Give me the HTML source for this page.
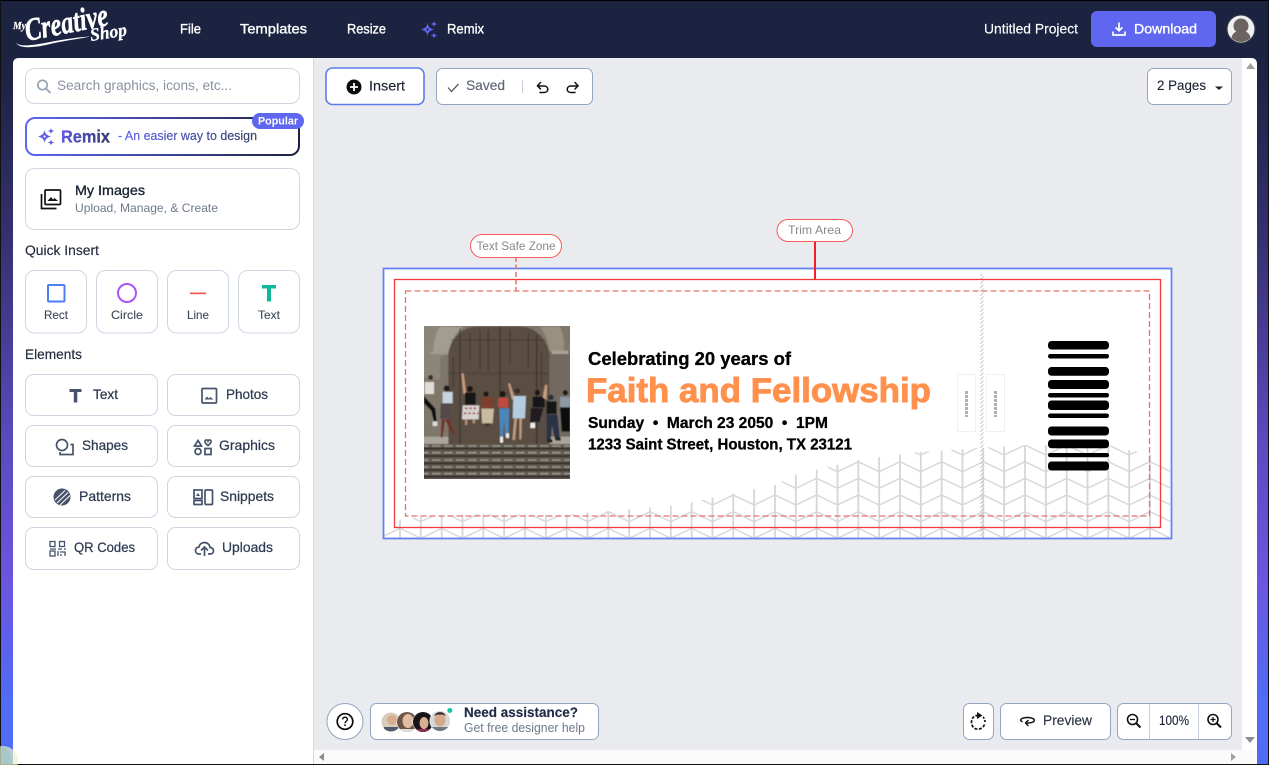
<!DOCTYPE html>
<html lang="en">
<head>
<meta charset="utf-8">
<title>My Creative Shop</title>
<style>
html,body{margin:0;padding:0;width:1269px;height:765px;overflow:hidden;background:#000}
svg{display:block}
text{font-family:"Liberation Sans",sans-serif}
.b{fill:#fff;stroke:#cfd6e2;stroke-width:1}
.t{fill:#fff;stroke:#93a5c0;stroke-width:1}
.l{font-size:14px;fill:#2f3b52;stroke:#2f3b52;stroke-width:.25}
.q{font-size:12px;fill:#3d4858;stroke:#3d4858;stroke-width:.1}
.n{font-size:14px;fill:#fff;stroke:#fff;stroke-width:.35}
.i{fill:none;stroke:#46536b;stroke-width:1.7}
.k{fill:none;stroke:#111;stroke-width:1.5;stroke-linecap:round;stroke-linejoin:round}
.s{font-family:"Liberation Serif",serif;font-weight:700;font-style:italic}
</style>
</head>
<body>
<svg width="1269" height="765" viewBox="0 0 1269 765" xmlns="http://www.w3.org/2000/svg">
<defs>
<linearGradient id="g" x1="0" y1="0" x2="0" y2="1">
<stop offset="0" stop-color="#1c2340"/><stop offset=".1" stop-color="#1e2344"/><stop offset=".31" stop-color="#35306f"/><stop offset=".58" stop-color="#5a4bc0"/><stop offset=".76" stop-color="#6b55e0"/><stop offset=".92" stop-color="#4f6cf5"/><stop offset="1" stop-color="#4f6cf5"/>
</linearGradient>
<linearGradient id="rx" x1="0" y1="0" x2="1" y2="0"><stop offset="0" stop-color="#5f66ef"/><stop offset="1" stop-color="#1c2340"/></linearGradient>
<linearGradient id="rt" gradientUnits="userSpaceOnUse" x1="118" y1="0" x2="257" y2="0"><stop offset="0" stop-color="#5f66ef"/><stop offset="1" stop-color="#3a4568"/></linearGradient>
<linearGradient id="rm" gradientUnits="userSpaceOnUse" x1="61" y1="0" x2="110" y2="0"><stop offset="0" stop-color="#5f5ae0"/><stop offset="1" stop-color="#333a70"/></linearGradient>
<pattern id="chev" patternUnits="userSpaceOnUse" x="400" y="444" width="250" height="100">
<path d="M0 0V100M20.83 0V100M41.67 0V100M62.5 0V100M83.33 0V100M104.17 0V100M125 0V100M145.83 0V100M166.67 0V100M187.5 0V100M208.33 0V100M229.17 0V100M250 0V100" stroke="#d6d6d6" stroke-width="1.8"/>
<path id="zz" d="M0 1L20.83 11L41.67 1L62.5 11L83.33 1L104.17 11L125 1L145.83 11L166.67 1L187.5 11L208.33 1L229.17 11L250 1" fill="none" stroke="#d8d8d8" stroke-width="1.5"/>
<path d="M0 17.67L20.83 27.67L41.67 17.67L62.5 27.67L83.33 17.67L104.17 27.67L125 17.67L145.83 27.67L166.67 17.67L187.5 27.67L208.33 17.67L229.17 27.67L250 17.67" fill="none" stroke="#d8d8d8" stroke-width="1.5"/>
<path d="M0 34.33L20.83 44.33L41.67 34.33L62.5 44.33L83.33 34.33L104.17 44.33L125 34.33L145.83 44.33L166.67 34.33L187.5 44.33L208.33 34.33L229.17 44.33L250 34.33" fill="none" stroke="#d8d8d8" stroke-width="1.5"/>
<path d="M0 51L20.83 61L41.67 51L62.5 61L83.33 51L104.17 61L125 51L145.83 61L166.67 51L187.5 61L208.33 51L229.17 61L250 51" fill="none" stroke="#d8d8d8" stroke-width="1.5"/>
<path d="M0 67.67L20.83 77.67L41.67 67.67L62.5 77.67L83.33 67.67L104.17 77.67L125 67.67L145.83 77.67L166.67 67.67L187.5 77.67L208.33 67.67L229.17 77.67L250 67.67" fill="none" stroke="#d8d8d8" stroke-width="1.5"/>
<path d="M0 84.33L20.83 94.33L41.67 84.33L62.5 94.33L83.33 84.33L104.17 94.33L125 84.33L145.83 94.33L166.67 84.33L187.5 94.33L208.33 84.33L229.17 94.33L250 84.33" fill="none" stroke="#d8d8d8" stroke-width="1.5"/>
</pattern>
<pattern id="hat" patternUnits="userSpaceOnUse" width="4" height="4">
<path d="M0 4L4 0" stroke="#bdbdbd" stroke-width=".8"/>
</pattern>
<filter id="soft" x="0" y="0" width="1" height="1"><feGaussianBlur stdDeviation="1.3"/></filter>
<clipPath id="ph"><rect x="424" y="326" width="146" height="153"/></clipPath>
<clipPath id="av1"><circle cx="391" cy="722" r="9.5"/></clipPath>
<clipPath id="av2"><circle cx="407" cy="722" r="10"/></clipPath>
<clipPath id="av3"><circle cx="423" cy="722" r="10"/></clipPath>
<clipPath id="av4"><circle cx="440" cy="721" r="10"/></clipPath>
<clipPath id="ava"><circle cx="1241" cy="29" r="13"/></clipPath>
<path id="sp" fill-rule="evenodd" d="M7.5 2C8.300 6 9.500 7.200 14 8.500C9.500 9.800 8.300 11 7.500 15C6.700 11 5.500 9.800 1 8.500C5.500 7.200 6.700 6 7.500 2ZM7.500 7.400A1.100 1.100 0 1 0 7.500 9.600A1.100 1.100 0 1 0 7.500 7.400ZM14 0C14.500 2 15 2.500 17.500 3C15 3.500 14.500 4 14 6C13.500 4 13 3.500 10.500 3C13 2.500 13.500 2 14 0ZM14 11.500C14.500 13.500 15 14 17.500 14.500C15 15 14.500 15.500 14 17.500C13.500 15.500 13 15 10.500 14.500C13 14 13.500 13.500 14 11.500Z"/>
</defs>

<rect width="1269" height="765" fill="url(#g)"/>
<rect width="1269" height="58" fill="#1c2340"/>
<rect width="1269" height="1" fill="#000"/>
<rect width="1" height="765" fill="#111"/>
<rect x="1268" width="1" height="765" fill="#111"/>

<!-- logo -->
<g fill="#fff" stroke="#fff">
<text class="s" x="13" y="29" font-size="10.500" stroke-width=".2" textLength="13" lengthAdjust="spacingAndGlyphs">My</text>
<text class="s" transform="translate(27 41) rotate(-11)" font-size="32" stroke-width=".5" textLength="84" lengthAdjust="spacingAndGlyphs">Creative</text>
<text class="s" transform="translate(91 41) rotate(-9)" font-size="18" stroke-width=".3" textLength="37" lengthAdjust="spacingAndGlyphs">Shop</text>
<path stroke="none" d="M16 42C18 47 30 46 50 42C65 39 80 37 91 36.500C78 39 62 41 48 44.500C32 48 18 49 16 42Z"/>
</g>

<!-- nav -->
<text class="n" x="180" y="33.500" textLength="21" lengthAdjust="spacingAndGlyphs">File</text>
<text class="n" x="240" y="33.500" textLength="67" lengthAdjust="spacingAndGlyphs">Templates</text>
<text class="n" x="347" y="33.500" textLength="39" lengthAdjust="spacingAndGlyphs">Resize</text>
<use href="#sp" x="420" y="21" fill="#5f66ef"/>
<text class="n" x="447" y="33.500" textLength="37" lengthAdjust="spacingAndGlyphs">Remix</text>
<text class="n" x="984" y="33.500" textLength="94" lengthAdjust="spacingAndGlyphs" style="stroke-width:.15">Untitled Project</text>
<rect x="1091" y="11" width="125" height="36" rx="6" fill="#5f66ef"/>
<path d="M1119 22.500V30.500M1115.600 27.400L1119 30.800L1122.400 27.400M1113 31.500V35H1125V31.500" fill="none" stroke="#fff" stroke-width="1.700"/>
<text class="n" x="1134" y="33.500" textLength="63" lengthAdjust="spacingAndGlyphs">Download</text>
<circle cx="1241" cy="29" r="15" fill="#2a2f45"/>
<circle cx="1241" cy="29" r="13.500" fill="#eef0f2"/>
<g clip-path="url(#ava)" fill="#6b6460"><circle cx="1241" cy="26" r="7.500"/><path d="M1231 43C1231 33 1235 31 1241 31C1247 31 1251 33 1251 43Z"/></g>

<!-- main panels -->
<path d="M19 58H1251Q1257 58 1257 64V764H13V64Q13 58 19 58Z" fill="#fff"/>
<rect x="314" y="58" width="928" height="692" fill="#e9ebef"/>
<rect x="313" y="58" width="1" height="706" fill="#d5d9e2"/>
<rect x="314" y="750" width="943" height="14" fill="#fafafa"/>
<rect y="764" width="1269" height="1" fill="#111"/>
<path d="M1246 69L1250.500 63L1255 69Z" fill="#a0a0a0"/>
<path d="M1245 737H1255L1250 743Z" fill="#8e8e8e"/>
<path d="M324 753V761L319 757Z" fill="#8a8a8a"/>
<path d="M1231 753V761L1236 757Z" fill="#a0a0a0"/>
<circle cx="3" cy="761" r="15" fill="#e8f2c8" opacity=".7"/>
<path d="M1 745.500A14 16 0 0 1 11 764H1Z" fill="#a5c8c8"/>

<!-- search -->
<rect class="b" x="25.500" y="68.500" width="274" height="35" rx="9"/>
<circle cx="42.500" cy="85" r="4.700" fill="none" stroke="#93a0ae" stroke-width="1.600"/><path d="M46 88.500L50.500 93" stroke="#93a0ae" stroke-width="1.800"/>
<text x="57" y="90" font-size="13.500" fill="#8893a0" textLength="175" lengthAdjust="spacingAndGlyphs">Search graphics, icons, etc...</text>

<!-- remix -->
<rect x="26" y="118" width="273" height="37" rx="9" fill="#fff" stroke="url(#rx)" stroke-width="2"/>
<use href="#sp" x="37" y="128" fill="#5f5ae0"/>
<text x="61" y="142.500" font-size="17.500" font-weight="700" fill="url(#rm)" stroke="url(#rm)" stroke-width=".3" textLength="49" lengthAdjust="spacingAndGlyphs">Remix</text>
<text x="118" y="140" font-size="12.500" fill="url(#rt)" stroke="url(#rt)" stroke-width=".2" textLength="139" lengthAdjust="spacingAndGlyphs">- An easier way to design</text>
<rect x="252" y="113" width="52" height="16" rx="8" fill="#5f66ef"/>
<text x="258" y="124.500" font-size="11" font-weight="700" fill="#fff" textLength="40" lengthAdjust="spacingAndGlyphs">Popular</text>

<!-- my images -->
<rect class="b" x="25.500" y="168.500" width="274" height="61" rx="9"/>
<g fill="none" stroke="#111" stroke-width="1.700"><rect x="45" y="190" width="15.500" height="14.500" rx="1"/><path d="M41.500 194V208.500H56.500"/></g>
<path d="M47.500 201L51 197L53 199.500L54.500 198L58 201Z" fill="#111"/>
<text x="75" y="195" font-size="14" fill="#1a2233" stroke="#1a2233" stroke-width=".35" textLength="70" lengthAdjust="spacingAndGlyphs">My Images</text>
<text x="75" y="212" font-size="12" fill="#6d7a8c" textLength="143" lengthAdjust="spacingAndGlyphs">Upload, Manage, &amp; Create</text>

<!-- quick insert -->
<text x="25" y="255" font-size="14" fill="#222b3d" stroke="#222b3d" stroke-width=".15" textLength="74" lengthAdjust="spacingAndGlyphs">Quick Insert</text>
<rect class="b" x="25.500" y="270.500" width="61" height="62.500" rx="9"/>
<rect class="b" x="96.500" y="270.500" width="61" height="62.500" rx="9"/>
<rect class="b" x="167.500" y="270.500" width="61" height="62.500" rx="9"/>
<rect class="b" x="238.500" y="270.500" width="61" height="62.500" rx="9"/>
<rect x="48" y="285" width="16.500" height="16.500" rx="1" fill="none" stroke="#4f7df5" stroke-width="2"/>
<circle cx="127" cy="293" r="9" fill="none" stroke="#a855f7" stroke-width="2"/>
<rect x="190" y="292.500" width="16" height="1.700" fill="#f4574a"/>
<path d="M262 285H276V288.500H271V301.500H267V288.500H262Z" fill="#10b89a"/>
<text class="q" x="44" y="319" textLength="24" lengthAdjust="spacingAndGlyphs">Rect</text>
<text class="q" x="111" y="319" textLength="32" lengthAdjust="spacingAndGlyphs">Circle</text>
<text class="q" x="187" y="319" textLength="22" lengthAdjust="spacingAndGlyphs">Line</text>
<text class="q" x="258" y="319" textLength="22" lengthAdjust="spacingAndGlyphs">Text</text>

<!-- elements -->
<text x="25" y="359" font-size="14" fill="#222b3d" stroke="#222b3d" stroke-width=".15" textLength="57" lengthAdjust="spacingAndGlyphs">Elements</text>
<rect class="b" x="25.500" y="374.500" width="132" height="41" rx="8"/>
<rect class="b" x="167.500" y="374.500" width="132" height="41" rx="8"/>
<rect class="b" x="25.500" y="425.500" width="132" height="41" rx="8"/>
<rect class="b" x="167.500" y="425.500" width="132" height="41" rx="8"/>
<rect class="b" x="25.500" y="476.500" width="132" height="41" rx="8"/>
<rect class="b" x="167.500" y="476.500" width="132" height="41" rx="8"/>
<rect class="b" x="25.500" y="527.500" width="132" height="42" rx="8"/>
<rect class="b" x="167.500" y="527.500" width="132" height="42" rx="8"/>

<path d="M69.500 389H81.500V392H77.300V402.500H73.800V392H69.500Z" fill="#46536b"/>
<text class="l" x="93" y="399" textLength="25" lengthAdjust="spacingAndGlyphs">Text</text>
<rect class="i" x="202" y="388.500" width="14.500" height="14.500" rx="1"/><path d="M204.500 399.500L207 396.500L208.800 398.500L210.300 397L213.500 399.500Z" fill="#46536b"/>
<text class="l" x="226" y="399" textLength="42" lengthAdjust="spacingAndGlyphs">Photos</text>

<circle class="i" cx="62" cy="445" r="5.500"/><path class="i" d="M70.500 444.500H73V454.500H60V452"/>
<text class="l" x="82" y="450" textLength="46" lengthAdjust="spacingAndGlyphs">Shapes</text>
<path class="i" d="M198 440.500L201.500 446H194.500Z"/><path class="i" d="M205 441.500C205 439.500 207.500 439.500 208 441C208.500 439.500 211 439.500 211 441.500C211 443.500 208 445.500 208 445.500C208 445.500 205 443.500 205 441.500Z"/><circle class="i" cx="198" cy="451.500" r="3"/><rect class="i" x="205" y="448.500" width="6" height="6"/>
<text class="l" x="219" y="450" textLength="56" lengthAdjust="spacingAndGlyphs">Graphics</text>

<circle cx="62" cy="497" r="8.500" fill="#46536b"/><path d="M55 500L65 490.500M57 503L68 492.500M60 505L70 495.500" stroke="#fff" stroke-width="1"/>
<text class="l" x="79" y="501" textLength="52" lengthAdjust="spacingAndGlyphs">Patterns</text>
<rect class="i" x="194" y="490" width="8" height="8.500"/><rect class="i" x="194" y="500.500" width="8" height="4"/><rect class="i" x="205" y="490" width="7.500" height="14.500" rx="1"/><path d="M196 496L198 493L200 496Z" fill="#46536b"/>
<text class="l" x="220" y="501" textLength="54" lengthAdjust="spacingAndGlyphs">Snippets</text>

<g fill="none" stroke="#46536b" stroke-width="1.300"><rect x="50" y="541.500" width="5" height="5"/><rect x="59.500" y="541.500" width="5" height="5"/><rect x="50" y="551" width="5" height="5"/><path d="M50 549H56M58 549H62M64 549H66M58 551V556M60 552H65V556M61 554V556"/></g>
<text class="l" x="74" y="552" textLength="61" lengthAdjust="spacingAndGlyphs">QR Codes</text>
<path class="i" d="M201 554H199C196.500 554 195.500 552 195.500 550.500C195.500 548.500 197 547 199 547C199.500 544 202 542.500 204.500 542.500C207.500 542.500 209.800 544.800 210 547.500C212.300 547.700 213.500 549 213.500 551C213.500 553 212 554 210 554H208"/><path class="i" d="M204.500 556V547.500M201 550.500L204.500 547L208 550.500"/>
<text class="l" x="222" y="552" textLength="51" lengthAdjust="spacingAndGlyphs">Uploads</text>

<!-- top toolbar -->
<rect x="326" y="68" width="98" height="36.500" rx="6.500" fill="#fff" stroke="#5f7be8" stroke-width="1.600"/>
<circle cx="354" cy="87" r="7.500" fill="#0c0c10"/><path d="M350 87H358M354 83V91" stroke="#fff" stroke-width="1.800"/>
<text x="369" y="90.500" font-size="14" fill="#1a2233" stroke="#1a2233" stroke-width=".15" textLength="36" lengthAdjust="spacingAndGlyphs">Insert</text>
<rect class="t" x="436.500" y="68.500" width="156" height="36" rx="6"/>
<path d="M448 87.500L451.500 91.500L458.500 84" fill="none" stroke="#55606f" stroke-width="1.300"/>
<text x="466" y="90" font-size="14" fill="#5c6676" stroke="#5c6676" stroke-width=".15" textLength="39" lengthAdjust="spacingAndGlyphs">Saved</text>
<rect x="522" y="80" width="1" height="13" fill="#c5cfdb"/>
<path class="k" d="M537.500 86H544C549 86 549 92.500 544 92.500H540"/><path class="k" d="M540.500 82.500L537.500 85.800L540.500 89"/>
<path class="k" d="M578 86H571C566 86 566 92.500 571 92.500H575"/><path class="k" d="M575 82.500L578 85.800L575 89"/>
<rect class="t" x="1147.500" y="68.500" width="84" height="36" rx="6"/>
<text x="1157" y="90" font-size="14" fill="#1a2233" stroke="#1a2233" stroke-width=".12" textLength="49" lengthAdjust="spacingAndGlyphs">2 Pages</text>
<path d="M1215 86.500H1223L1219 90Z" fill="#1a2233"/>

<!-- canvas -->
<rect x="383.500" y="268.500" width="788" height="270" fill="#fff"/>
<path d="M384.500 522L420 517L470 514L560 515L620 510L680 505L720 496L775 485L795 475L858 460L918 452L1025 445L1108 445L1130 450L1170 458V538H384.500Z" fill="url(#chev)"/>

<rect x="980" y="274" width="3.500" height="264" fill="url(#hat)"/>
<rect x="957.500" y="374.500" width="18" height="57" fill="#fff" stroke="#f0f0f0"/>
<rect x="986.500" y="374.500" width="18" height="57" fill="#fff" stroke="#f0f0f0"/>
<path d="M966.500 391V417M995.500 391V417" stroke="#b0b0b0" stroke-width="3" stroke-dasharray="3 1"/>

<g clip-path="url(#ph)">
<rect x="424" y="326" width="146" height="153" fill="#7f776b"/>
<g transform="translate(420 320) scale(.33333)" filter="url(#soft)">
<rect x="0" y="10" width="460" height="480" fill="#7f776b"/>
<path d="M0 10H90V100L60 110V180L0 170Z" fill="#8c8579"/>
<path d="M60 20H130C105 40 90 70 85 100L40 100C40 70 45 40 60 20Z" fill="#a39c90"/>
<path d="M360 20H420C430 40 435 70 430 95H390C385 70 375 40 360 20Z" fill="#98917f"/>
<rect x="385" y="95" width="75" height="255" fill="#726b60"/>
<rect x="395" y="92" width="50" height="10" fill="#aaa397"/>
<rect x="30" y="95" width="60" height="8" fill="#a09a8d"/>
<path d="M85 375V100C95 50 130 20 170 20H300C345 20 380 55 388 100V375Z" fill="#5a4d43"/>
<path d="M120 25V375M240 20V375M350 45V375" stroke="#362d25" stroke-width="3"/>
<path d="M180 30V150M150 40V120M205 30V150M270 30V130M325 40V140M100 110V200M365 100V200" stroke="#3a3027" stroke-width="2.500"/>
<path d="M95 60H380M85 160H388" stroke="#2a221c" stroke-width="3" stroke-dasharray="3 5"/>
<rect x="0" y="350" width="85" height="25" fill="#aaa59b"/>
<rect x="388" y="350" width="72" height="25" fill="#aaa59b"/>
<rect x="0" y="372" width="460" height="118" fill="#5f5a51"/>
<path d="M0 386H460M0 408H460M0 430H460M0 450H460M0 470H460" stroke="#37322b" stroke-width="6"/>
<path d="M0 378H460M0 398H460M0 420H460M0 441H460M0 461H460" stroke="#a39d92" stroke-width="4" stroke-dasharray="26 10"/>
<!-- people -->
<circle cx="32" cy="172" r="7" fill="#3a2b22"/><rect x="14" y="186" width="28" height="36" fill="#e0dcd8"/><path d="M12 228L46 266L50 305L42 305L34 272L12 250Z" fill="#111"/><rect x="38" y="304" width="14" height="14" fill="#ddd"/>
<circle cx="80" cy="205" r="9" fill="#231a16"/><rect x="68" y="216" width="30" height="34" fill="#c8d4de"/><path d="M62 250H90L93 296H60Z" fill="#52494b"/><path d="M65 296L62 352H68L75 298ZM85 296L105 340L98 345L75 298Z" fill="#70312c"/>
<path d="M124 160L131 160L139 222L130 222Z" fill="#c99a7c"/><circle cx="150" cy="207" r="9" fill="#1f1714"/><rect x="135" y="218" width="32" height="36" fill="#141214"/><path d="M128 256H178L176 298H126Z" fill="#d7d3d0"/><path d="M135 265H172M132 280H176" stroke="#a83a30" stroke-width="5" stroke-dasharray="7 6"/><path d="M135 298H142V315H135ZM158 298H165V310H158Z" fill="#b98d72"/>
<circle cx="198" cy="222" r="8" fill="#201814"/><rect x="183" y="232" width="38" height="32" fill="#7c3f2c"/><path d="M184 266H222L218 310H186Z" fill="#c9bba0"/><rect x="195" y="310" width="14" height="8" fill="#3e3530"/>
<circle cx="248" cy="222" r="9" fill="#1c1411"/><rect x="235" y="233" width="30" height="30" fill="#c24a3e"/><path d="M238 265H268L266 350H256L252 300L249 350H240Z" fill="#4c86b9"/><rect x="240" y="350" width="9" height="18" fill="#eee"/><rect x="258" y="340" width="9" height="14" fill="#eee"/>
<path d="M264 190L270 190L285 235L276 240Z" fill="#c59c80"/><circle cx="292" cy="213" r="8" fill="#3b2a22"/><path d="M280 228H318L315 295H278Z" fill="#b3cce0"/><path d="M283 295H291L285 360H277ZM298 295H306L304 358H298Z" fill="#c09a7f"/>
<circle cx="352" cy="218" r="8" fill="#1c1714"/><rect x="338" y="230" width="36" height="32" fill="#19181a"/><path d="M332 264H370L358 308L345 303L338 320L330 315Z" fill="#201e22"/><rect x="331" y="308" width="14" height="16" fill="#eee"/><path d="M368 232L375 195H382L380 240Z" fill="#c59c80"/>
<circle cx="393" cy="232" r="8" fill="#2d2a3e"/><rect x="380" y="244" width="30" height="38" fill="#151416"/><path d="M380 283H412L420 360H405L396 315L392 365H380Z" fill="#2b3344"/><rect x="383" y="358" width="14" height="10" fill="#222"/><rect x="408" y="352" width="14" height="10" fill="#222"/>
<circle cx="436" cy="218" r="8" fill="#241b17"/><rect x="420" y="230" width="30" height="32" fill="#8c98a4"/><path d="M420 262H450V335H425Z" fill="#0f0f11"/>
</g>
</g>

<text x="588" y="365" font-size="18" font-weight="700" fill="#000" stroke="#000" stroke-width=".3" textLength="203" lengthAdjust="spacingAndGlyphs">Celebrating 20 years of</text>
<text x="586" y="402" font-size="34" font-weight="700" fill="#ff914d" stroke="#ff914d" stroke-width=".9" textLength="345" lengthAdjust="spacingAndGlyphs">Faith and Fellowship</text>
<text x="588" y="428" font-size="16" font-weight="700" fill="#000" stroke="#000" stroke-width=".3" textLength="240" lengthAdjust="spacingAndGlyphs" xml:space="preserve">Sunday  •  March 23 2050  •  1PM</text>
<text x="588" y="449.500" font-size="16" font-weight="700" fill="#000" stroke="#000" stroke-width=".3" textLength="264" lengthAdjust="spacingAndGlyphs">1233 Saint Street, Houston, TX 23121</text>

<g fill="#000">
<rect x="1048" y="341" width="61" height="8.500" rx="3.500"/>
<rect x="1048" y="354" width="61" height="4.500" rx="2.200"/>
<rect x="1048" y="367" width="61" height="8.800" rx="3.500"/>
<rect x="1048" y="380" width="61" height="9" rx="3.500"/>
<rect x="1048" y="393" width="61" height="4.500" rx="2.200"/>
<rect x="1048" y="400.500" width="61" height="9.500" rx="3.500"/>
<rect x="1048" y="413.500" width="61" height="4.500" rx="2.200"/>
<rect x="1048" y="426.500" width="61" height="9" rx="3.500"/>
<rect x="1048" y="439.500" width="61" height="8.800" rx="3.500"/>
<rect x="1048" y="453" width="61" height="4.300" rx="2.100"/>
<rect x="1048" y="461.500" width="61" height="9" rx="3.500"/>
</g>

<rect x="383.500" y="268.500" width="788" height="270" fill="none" stroke="#6384f0" stroke-width="1.800"/>
<rect x="394.500" y="279.500" width="766" height="248" fill="none" stroke="#f23a3a" stroke-width="1.300"/>
<rect x="405.500" y="291" width="744" height="225" fill="none" stroke="#e4746c" stroke-width="1.300" stroke-dasharray="6 3"/>

<path d="M815 241V279" stroke="#f01f2a" stroke-width="2"/>
<rect x="777" y="219.500" width="75.500" height="22" rx="11" fill="#fff" stroke="#f45b5b"/>
<text x="788" y="234" font-size="12" fill="#888" textLength="53" lengthAdjust="spacingAndGlyphs">Trim Area</text>
<path d="M516 257V291" stroke="#e4746c" stroke-width="1.500" stroke-dasharray="5 2.500"/>
<rect x="470.500" y="234.500" width="91" height="23" rx="11.500" fill="#fff" stroke="#f45b5b"/>
<text x="476.500" y="250" font-size="12" fill="#888" textLength="79" lengthAdjust="spacingAndGlyphs">Text Safe Zone</text>

<!-- bottom left -->
<circle class="t" cx="345" cy="721.500" r="18"/>
<circle cx="345" cy="721.500" r="7.800" fill="none" stroke="#0c0c10" stroke-width="1.700"/>
<path d="M342.600 719.500C342.600 716.500 347.400 716.500 347.400 719.500C347.400 721.300 345 721.300 345 723.300" fill="none" stroke="#0c0c10" stroke-width="1.400"/><circle cx="345" cy="725.200" r=".9" fill="#0c0c10"/>
<rect class="t" x="370.500" y="703.500" width="228" height="36" rx="6"/>
<g clip-path="url(#av1)"><rect x="380" y="711" width="22" height="22" fill="#d8ccb8"/><circle cx="392" cy="720" r="5" fill="#d8ac8e"/><rect x="384" y="727" width="18" height="7" fill="#50586a"/></g>
<circle cx="407" cy="722" r="10.500" fill="#fff"/>
<g clip-path="url(#av2)"><rect x="396" y="711" width="22" height="22" fill="#6d5447"/><ellipse cx="408" cy="721" rx="5.500" ry="7" fill="#e2bda3"/><rect x="398" y="729" width="20" height="5" fill="#ddd"/></g>
<circle cx="423" cy="722" r="10.500" fill="#fff"/>
<g clip-path="url(#av3)"><rect x="412" y="711" width="22" height="22" fill="#15151a"/><ellipse cx="424" cy="723" rx="4.500" ry="6" fill="#d9ad92"/><rect x="416" y="729" width="16" height="5" fill="#8a2f4a"/></g>
<circle cx="440" cy="721" r="10.500" fill="#fff"/>
<g clip-path="url(#av4)"><rect x="429" y="710" width="22" height="22" fill="#d5d8d6"/><ellipse cx="440" cy="720" rx="5.500" ry="6.500" fill="#d6a98c"/><path d="M434.500 716C435 711 445 711 445.500 716L443 714.500H437Z" fill="#2a211c"/><rect x="432" y="727" width="16" height="5" fill="#6d7680"/></g>
<circle cx="449.800" cy="710.500" r="2.500" fill="#10c8a0"/>
<text x="464" y="717" font-size="14" font-weight="700" fill="#1f2a44" stroke="#1f2a44" stroke-width=".15" textLength="114" lengthAdjust="spacingAndGlyphs">Need assistance?</text>
<text x="464" y="732" font-size="12.500" fill="#6d7a8c" textLength="121" lengthAdjust="spacingAndGlyphs">Get free designer help</text>

<!-- bottom right -->
<rect class="t" x="963.500" y="703.500" width="30" height="36" rx="6"/>
<path d="M983 717A7 7 0 0 1 985 722" fill="none" stroke="#111" stroke-width="1.700" stroke-dasharray="2 1.500"/>
<path d="M984.500 724.500A7 7 0 0 1 979 729L976 729A7 7 0 0 1 971.500 722C971.500 718 974 716 977 715.500" fill="none" stroke="#111" stroke-width="1.700" stroke-dasharray="3 1.500"/>
<path d="M977 712L982.500 715.500L977 719Z" fill="#111"/>
<rect class="t" x="1000.500" y="703.500" width="110" height="36" rx="6"/>
<path class="k" d="M1022 721.500C1019 720.500 1021 717.500 1027.500 717.500C1034 717.500 1036 720.500 1033 722C1031.500 722.800 1029.500 723 1027 723"/><path class="k" d="M1028 720.500L1025.500 723L1028 725.500"/>
<text x="1043" y="725" font-size="14" fill="#2a3344" stroke="#2a3344" stroke-width=".15" textLength="49" lengthAdjust="spacingAndGlyphs">Preview</text>
<rect class="t" x="1117.500" y="703.500" width="114" height="36" rx="6"/>
<path d="M1149.500 704V739M1198.500 704V739" stroke="#c5cfdb"/>
<circle cx="1132.500" cy="719.500" r="5" fill="none" stroke="#111" stroke-width="1.600"/><path d="M1136 723L1140.500 727.500" stroke="#111" stroke-width="2"/><path d="M1130 719.500H1135" stroke="#111" stroke-width="1.300"/>
<text x="1159" y="725" font-size="14" fill="#1a2233" stroke="#1a2233" stroke-width=".12" textLength="30" lengthAdjust="spacingAndGlyphs">100%</text>
<circle cx="1213" cy="719.500" r="5" fill="none" stroke="#111" stroke-width="1.600"/><path d="M1216.500 723L1221 727.500" stroke="#111" stroke-width="2"/><path d="M1210.500 719.500H1215.500M1213 717V722" stroke="#111" stroke-width="1.300"/>
</svg>
</body>
</html>
